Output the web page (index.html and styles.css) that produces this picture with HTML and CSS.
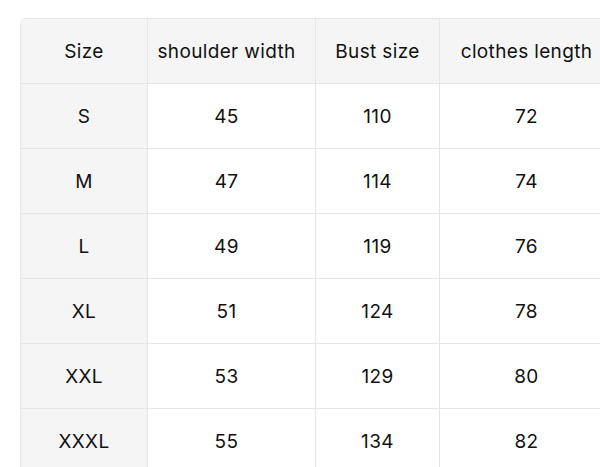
FILE: index.html
```html
<!DOCTYPE html>
<html>
<head>
<meta charset="utf-8">
<link rel="stylesheet" href="styles.css">
</head>
<body>
<div class="wrap">
<table class="size-table">
<colgroup>
<col class="c1"><col class="c2"><col class="c3"><col class="c4">
</colgroup>
<thead>
<tr><th>Size</th><th class="shoulder">shoulder width</th><th>Bust size</th><th>clothes length</th></tr>
</thead>
<tbody>
<tr><th>S</th><td class="shoulder">45</td><td>110</td><td>72</td></tr>
<tr><th>M</th><td class="shoulder">47</td><td>114</td><td>74</td></tr>
<tr><th>L</th><td class="shoulder">49</td><td>119</td><td>76</td></tr>
<tr><th>XL</th><td class="shoulder">51</td><td>124</td><td>78</td></tr>
<tr><th>XXL</th><td class="shoulder">53</td><td>129</td><td>80</td></tr>
<tr><th>XXXL</th><td class="shoulder">55</td><td>134</td><td>82</td></tr>
</tbody>
</table>
</div>
</body>
</html>
```
FILE: styles.css
```css
html, body {
  margin: 0;
  padding: 0;
  background: #ffffff;
  overflow: hidden;
}
.wrap {
  padding: 18px 0 0 20px;
  width: 600px;
  height: 467px;
  box-sizing: border-box;
  overflow: hidden;
}
.size-table {
  border-collapse: separate;
  border-spacing: 0;
  table-layout: fixed;
  width: 593px;
  font-family: Inter, "Liberation Sans", Arial, sans-serif;
  font-size: 19px;
  letter-spacing: 0.35px;
  color: #111111;
  border-top: 1px solid #e6e6e6;
  border-left: 1px solid #e6e6e6;
  border-top-left-radius: 7px;
}
.c1 { width: 127px; }
.c2 { width: 168px; }
.c3 { width: 124px; }
.c4 { width: 174px; }
.size-table th,
.size-table td {
  font-weight: normal;
  text-align: center;
  vertical-align: middle;
  padding: 0;
  border-right: 1px solid #e6e6e6;
  border-bottom: 1px solid #e6e6e6;
  box-sizing: border-box;
}
.size-table .shoulder {
  padding-right: 10px;
}
.size-table thead th {
  height: 65px;
  padding-top: 1px;
  background: #f5f5f5;
}
.size-table thead th:first-child {
  border-top-left-radius: 6px;
}
.size-table tbody th,
.size-table tbody td {
  height: 65px;
}
.size-table tbody th {
  background: #f5f5f5;
}
.size-table td {
  background: #ffffff;
}
```
